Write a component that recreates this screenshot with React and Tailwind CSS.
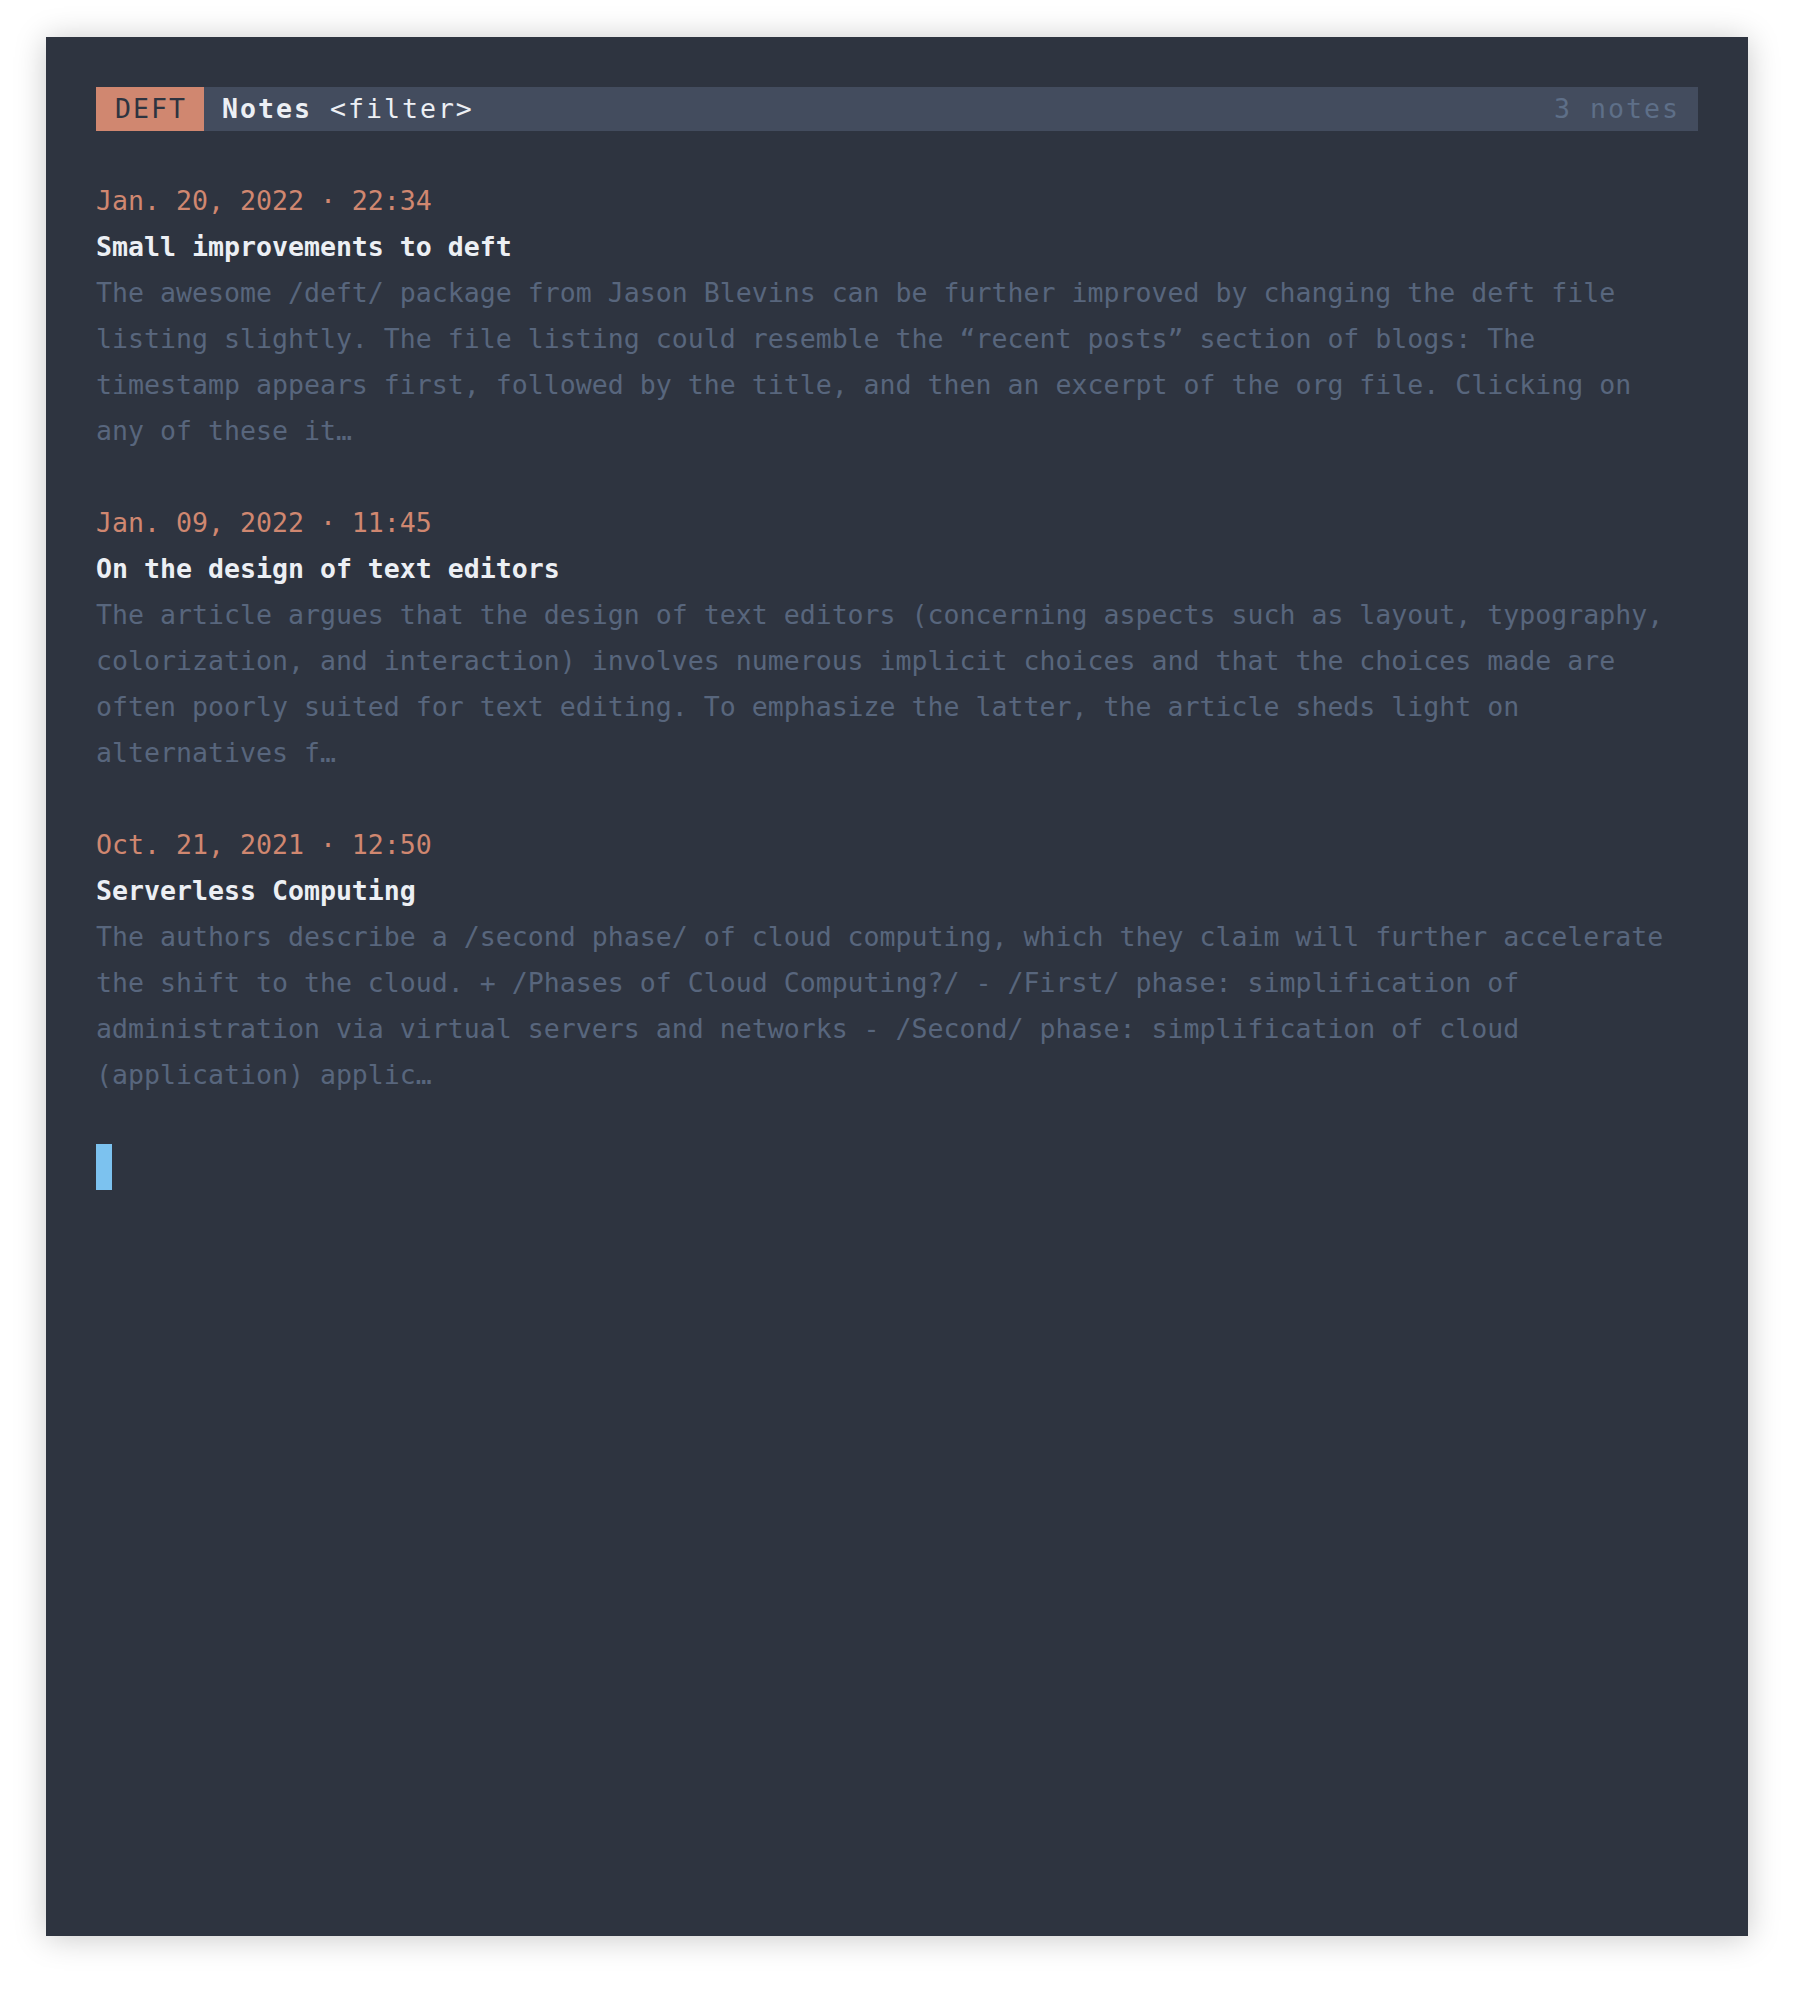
import React from "react";

const notes = [
  {
    date: "Jan. 20, 2022 · 22:34",
    title: "Small improvements to deft",
    excerpt: [
      "The awesome /deft/ package from Jason Blevins can be further improved by changing the deft file",
      "listing slightly. The file listing could resemble the “recent posts” section of blogs: The",
      "timestamp appears first, followed by the title, and then an excerpt of the org file. Clicking on",
      "any of these it…",
    ],
  },
  {
    date: "Jan. 09, 2022 · 11:45",
    title: "On the design of text editors",
    excerpt: [
      "The article argues that the design of text editors (concerning aspects such as layout, typography,",
      "colorization, and interaction) involves numerous implicit choices and that the choices made are",
      "often poorly suited for text editing. To emphasize the latter, the article sheds light on",
      "alternatives f…",
    ],
  },
  {
    date: "Oct. 21, 2021 · 12:50",
    title: "Serverless Computing",
    excerpt: [
      "The authors describe a /second phase/ of cloud computing, which they claim will further accelerate",
      "the shift to the cloud. + /Phases of Cloud Computing?/ - /First/ phase: simplification of",
      "administration via virtual servers and networks - /Second/ phase: simplification of cloud",
      "(application) applic…",
    ],
  },
];

function NoteEntry({ note }) {
  return (
    <div className="mb-[46px]">
      <div className="text-[#d08770]">{note.date}</div>
      <div className="font-bold text-[#eceff4]">{note.title}</div>
      {note.excerpt.map((line, i) => (
        <div key={i} className="whitespace-pre text-[#58667d]">
          {line}
        </div>
      ))}
    </div>
  );
}

export default function App() {
  return (
    <div className="w-[1794px] h-[1990px] bg-white pl-[46px] pt-[37px]">
      <div
        className="w-[1702px] h-[1899px] bg-[#2e3440] p-[50px] shadow-[0_2px_30px_rgba(0,0,0,0.22)] text-[26.57px] leading-[46px]"
        style={{ fontFamily: '"DejaVu Sans Mono", "Liberation Mono", monospace' }}
      >
        {/* Header */}
        <div className="flex items-center h-[44px] bg-[#434c5e] leading-[44px] tracking-[2px]">
          <div className="h-full bg-[#d08770] text-[#2e3440] pl-[19px] pr-[17px]">DEFT</div>
          <div className="ml-[18px] text-[#eceff4]">
            <span className="font-bold">Notes</span> &lt;filter&gt;
          </div>
          <div className="ml-auto pr-[18px] text-[#5e6f88]">3 notes</div>
        </div>

        {/* Notes list */}
        <div className="mt-[47px]">
          {notes.map((note, i) => (
            <NoteEntry key={i} note={note} />
          ))}
          <div className="mt-[2px] w-[16px] h-[46px] bg-[#7cc2ef]" />
        </div>
      </div>
    </div>
  );
}
